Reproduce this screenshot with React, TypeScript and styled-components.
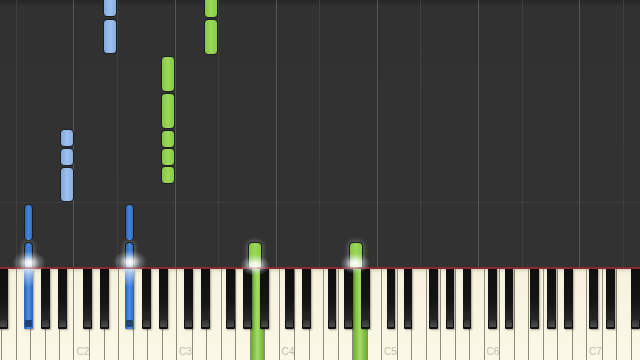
import React from 'react';
import styled, { createGlobalStyle } from 'styled-components';

const OCT = 101.2;
const W = OCT / 7;
const SEMI = OCT / 12;
const C2X = 73.5;
const FIRST_X = C2X - 6 * W; // D1
const LETTERS = ['C', 'D', 'E', 'F', 'G', 'A', 'B'];
const BLACK_SEMIS = [1, 3, 6, 8, 10];
const BLACK_NAMES: Record<number, string> = { 1: 'C#', 3: 'D#', 6: 'F#', 8: 'G#', 10: 'A#' };

type WhiteKeyInfo = { letter: string; octave: number; x: number };
const whiteKeys: WhiteKeyInfo[] = Array.from({ length: 48 }, (_, i) => {
  const n = i + 1;
  return { letter: LETTERS[n % 7], octave: 1 + Math.floor(n / 7), x: FIRST_X + i * W };
});

type BlackKeyInfo = { name: string; x: number };
const blackKeys: BlackKeyInfo[] = [];
for (let o = 1; o <= 7; o++) {
  const ox = C2X + (o - 2) * OCT;
  BLACK_SEMIS.forEach((s) => {
    const x = ox + s * SEMI + 1.1;
    if (x + 9 > 0 && x < 640) blackKeys.push({ name: `${BLACK_NAMES[s]}${o}`, x });
  });
}

const whiteX = (name: string) => {
  const k = whiteKeys.find((w) => `${w.letter}${w.octave}` === name);
  return k ? k.x : 0;
};
const blackX = (name: string) => {
  const k = blackKeys.find((b) => b.name === name);
  return k ? k.x : 0;
};

type Hand = 'lightBlue' | 'darkBlue' | 'green';
type Note = { key: string; black?: boolean; hand: Hand; top: number; bottom: number; playing?: boolean };

const notes: Note[] = [
  { key: 'E2', hand: 'lightBlue', top: -10, bottom: 17 },
  { key: 'E2', hand: 'lightBlue', top: 19, bottom: 54 },
  { key: 'B1', hand: 'lightBlue', top: 129, bottom: 147 },
  { key: 'B1', hand: 'lightBlue', top: 148, bottom: 166 },
  { key: 'B1', hand: 'lightBlue', top: 167, bottom: 202 },
  { key: 'F#1', black: true, hand: 'darkBlue', top: 204, bottom: 241 },
  { key: 'F#1', black: true, hand: 'darkBlue', top: 242, bottom: 275, playing: true },
  { key: 'F#2', black: true, hand: 'darkBlue', top: 204, bottom: 241 },
  { key: 'F#2', black: true, hand: 'darkBlue', top: 242, bottom: 275, playing: true },
  { key: 'B2', hand: 'green', top: 56, bottom: 92 },
  { key: 'B2', hand: 'green', top: 93, bottom: 129 },
  { key: 'B2', hand: 'green', top: 130, bottom: 148 },
  { key: 'B2', hand: 'green', top: 148, bottom: 166 },
  { key: 'B2', hand: 'green', top: 166, bottom: 184 },
  { key: 'E3', hand: 'green', top: -10, bottom: 18 },
  { key: 'E3', hand: 'green', top: 19, bottom: 55 },
  { key: 'A3', hand: 'green', top: 242, bottom: 275, playing: true },
  { key: 'A4', hand: 'green', top: 242, bottom: 275, playing: true },
];

const pressedWhite: Record<string, Hand> = { A3: 'green', A4: 'green' };
const pressedBlack: Record<string, Hand> = { 'F#1': 'darkBlue', 'F#2': 'darkBlue' };

const glows = [
  { x: 29, y: 263, r: 17 },
  { x: 130, y: 262, r: 17 },
  { x: 255, y: 265, r: 15 },
  { x: 355, y: 263, r: 15 },
];

const GlobalStyle = createGlobalStyle`
  html, body { margin: 0; padding: 0; background: #313131; }
  body { font-family: "Liberation Sans", Arial, sans-serif; overflow: hidden; }
`;

const Stage = styled.div`
  position: relative;
  width: 640px;
  height: 360px;
  overflow: hidden;
  display: flex;
  flex-direction: column;
  background: #313131;
`;

const NoteArea = styled.div`
  position: relative;
  height: 267px;
  flex: 0 0 auto;
  overflow: hidden;
  background: linear-gradient(to bottom, #272727 0, #313131 7px, #323232 100%);
`;

const Lanes = styled.div`
  display: flex;
  height: 100%;
  margin-left: ${FIRST_X}px;
`;

const Lane = styled.div<{ $line: 'c' | 'f' | 'none' }>`
  flex: 0 0 ${W}px;
  height: 100%;
  box-shadow: ${(p) =>
    p.$line === 'c'
      ? 'inset 1px 0 0 #555555'
      : p.$line === 'f'
      ? 'inset 1px 0 0 #3f3f3f'
      : 'none'};
`;

const MeasureLine = styled.div<{ $y: number }>`
  position: absolute;
  left: 0;
  right: 0;
  top: ${(p) => p.$y}px;
  height: 1px;
  background: rgba(255, 255, 255, 0.05);
`;

const noteFill: Record<Hand, string> = {
  lightBlue: 'linear-gradient(to right, #80a9dc 0%, #9dc1ec 50%, #86aede 100%)',
  darkBlue: 'linear-gradient(to right, #2d67b9 0%, #4585d8 50%, #316cbe 100%)',
  green: 'linear-gradient(to right, #84c742 0%, #9cd85a 50%, #88ca45 100%)',
};

const playingOverlay: Record<Hand, string> = {
  lightBlue: 'linear-gradient(to bottom, rgba(255,255,255,0) 40%, rgba(235,245,255,0.5) 80%)',
  darkBlue: 'linear-gradient(to bottom, rgba(255,255,255,0) 30%, rgba(200,225,255,0.55) 65%)',
  green: 'linear-gradient(to bottom, rgba(255,255,255,0) 35%, rgba(240,255,220,0.5) 70%)',
};

const NoteBlock = styled.div<{ $hand: Hand; $playing: boolean }>`
  position: absolute;
  box-sizing: border-box;
  border: 1px solid #1b1d1f;
  border-radius: 4px;
  background: ${(p) => (p.$playing ? `${playingOverlay[p.$hand]}, ` : '') + noteFill[p.$hand]};
  box-shadow: ${(p) => (p.$playing ? '0 0 5px 1px rgba(255,255,255,0.28)' : 'none')};
`;

const RedLine = styled.div`
  flex: 0 0 2px;
  background: #8a2a30;
`;

const Keyboard = styled.div`
  position: relative;
  flex: 1 1 auto;
  overflow: hidden;
`;

const WhiteRow = styled.div`
  display: flex;
  height: 100%;
  margin-left: ${FIRST_X}px;
`;

const whiteFill: Record<Hand | 'none', string> = {
  none: 'linear-gradient(to bottom, #d9d5c2 0, #f6f2de 4px, #fbf8e7 100%)',
  green: 'linear-gradient(to right, #6aa82c 0%, #a4dc68 50%, #6eac30 100%)',
  lightBlue: 'linear-gradient(to right, #80a9dc 0%, #9dc1ec 50%, #86aede 100%)',
  darkBlue: 'linear-gradient(to right, #2d67b9 0%, #4585d8 50%, #316cbe 100%)',
};

const WhiteKey = styled.div<{ $pressed: Hand | 'none' }>`
  flex: 0 0 ${W}px;
  height: 100%;
  box-sizing: border-box;
  border-left: 1px solid #8e8b7f;
  background: ${(p) => whiteFill[p.$pressed]};
  display: flex;
  align-items: flex-end;
`;

const KeyLabel = styled.span`
  font-family: "Liberation Sans", Arial, sans-serif;
  font-size: 10px;
  line-height: 1;
  color: #c4c0ad;
  padding: 0 0 3px 2px;
`;

const BlackKey = styled.div<{ $pressed: boolean }>`
  position: absolute;
  top: 0;
  width: 8.8px;
  height: 60px;
  box-sizing: border-box;
  border-radius: 0 0 1px 1px;
  background: ${(p) =>
    p.$pressed
      ? 'linear-gradient(to right, #2a5fb0 0%, #4c8ee2 50%, #2c62b3 100%)'
      : 'linear-gradient(to bottom, #0e0e0e 0%, #151515 55%, #262626 84%, #111 86%)'};
  box-shadow: 1px 1px 2px rgba(0, 0, 0, 0.35);

  &::before {
    content: '';
    position: absolute;
    left: 0;
    right: 0;
    top: 0;
    height: 18px;
    background: ${(p) =>
      p.$pressed
        ? 'linear-gradient(to bottom, rgba(230,240,255,0.75), rgba(160,200,255,0))'
        : 'none'};
  }

  &::after {
    content: '';
    position: absolute;
    left: 1px;
    right: 1px;
    bottom: 2px;
    height: 7px;
    border-radius: 1px;
    background: ${(p) =>
      p.$pressed
        ? 'linear-gradient(to bottom, #1f3f70, #26477a)'
        : 'linear-gradient(to bottom, #2e2e2e, #4e4e4e)'};
  }
`;

const Glow = styled.div`
  position: absolute;
  border-radius: 50%;
  pointer-events: none;
  background: radial-gradient(
    ellipse,
    rgba(255, 255, 255, 1) 0%,
    rgba(255, 255, 255, 0.75) 18%,
    rgba(225, 238, 255, 0.28) 45%,
    rgba(255, 255, 255, 0) 70%
  );
`;

export default function App() {
  return (
    <>
      <GlobalStyle />
      <Stage>
        <NoteArea>
          <Lanes>
            {whiteKeys.map((k, i) => (
              <Lane key={i} $line={k.letter === 'C' ? 'c' : k.letter === 'F' ? 'f' : 'none'} />
            ))}
          </Lanes>
          <MeasureLine $y={202} />
          {notes.map((n, i) => {
            const x = n.black ? blackX(n.key) : whiteX(n.key) + 0.6;
            const width = n.black ? 8.8 : W - 0.2;
            return (
              <NoteBlock
                key={i}
                $hand={n.hand}
                $playing={!!n.playing}
                style={{ left: x, top: n.top, width, height: n.bottom - n.top }}
              />
            );
          })}
        </NoteArea>
        <RedLine />
        <Keyboard>
          <WhiteRow>
            {whiteKeys.map((k, i) => {
              const name = `${k.letter}${k.octave}`;
              return (
                <WhiteKey key={i} $pressed={pressedWhite[name] ?? 'none'}>
                  {k.letter === 'C' && <KeyLabel>{name}</KeyLabel>}
                </WhiteKey>
              );
            })}
          </WhiteRow>
          {blackKeys.map((b) => (
            <BlackKey key={b.name} $pressed={!!pressedBlack[b.name]} style={{ left: b.x }} />
          ))}
        </Keyboard>
        {glows.map((g, i) => (
          <Glow
            key={i}
            style={{ left: g.x - g.r, top: g.y - g.r * 0.7, width: g.r * 2, height: g.r * 1.4 }}
          />
        ))}
      </Stage>
    </>
  );
}
